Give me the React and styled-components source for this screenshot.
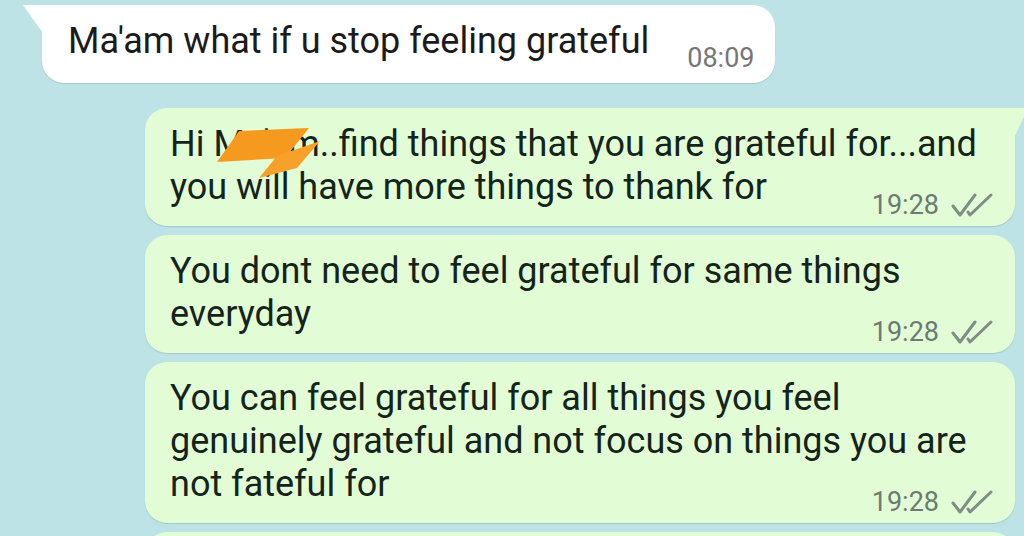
import React from "react";
import styled, { createGlobalStyle } from "styled-components";

const GlobalStyle = createGlobalStyle`
  html, body {
    margin: 0;
    padding: 0;
    background: #bde3e6;
    overflow: hidden;
  }
  body {
    font-family: Roboto, "Noto Sans", "Liberation Sans", sans-serif;
  }
`;

const Chat = styled.div`
  width: 1024px;
  height: 536px;
  overflow: hidden;
  display: flex;
  flex-direction: column;
  padding-top: 5px;
  box-sizing: border-box;
`;

const InRow = styled.div`
  display: flex;
  padding-left: 42px;
  margin-bottom: 25px;
`;

const InBubble = styled.div`
  position: relative;
  display: flex;
  align-items: flex-end;
  background: #ffffff;
  border-radius: 0 22px 22px 22px;
  padding: 15px 20px 10px 26px;
  box-shadow: 0 1px 1px rgba(40, 80, 80, 0.18);

  &::before {
    content: "";
    position: absolute;
    top: 0;
    left: -19px;
    width: 20px;
    height: 28px;
    background: #ffffff;
    clip-path: polygon(0 0, 100% 0, 100% 100%);
  }
`;

const InText = styled.div`
  font-size: 36px;
  line-height: 42px;
  color: #1b1b1b;
  margin-bottom: 11px;
  margin-right: 38px;
  white-space: nowrap;
`;

const OutList = styled.div`
  display: flex;
  flex-direction: column;
  gap: 9px;
  padding-left: 145px;
  padding-right: 9px;
`;

const OutBubble = styled.div`
  position: relative;
  background: #e2fcd6;
  border-radius: ${p => (p.$tail ? "22px 0 22px 22px" : "22px")};
  padding: 15px 22px 6px 25px;
  min-height: ${p => (p.$stub ? "60px" : "0")};
  box-shadow: 0 1px 1px rgba(40, 80, 80, 0.18);

  &::after {
    content: "";
    display: ${p => (p.$tail ? "block" : "none")};
    position: absolute;
    top: 0;
    right: -13px;
    width: 14px;
    height: 30px;
    background: #e2fcd6;
    clip-path: polygon(0 0, 100% 0, 0 100%);
  }
`;

const Line = styled.div`
  font-size: 36px;
  line-height: 43px;
  color: #15241a;
  white-space: nowrap;
`;

const Hidden = styled.span`
  position: relative;
  display: inline-block;
`;

const Scribble = styled.svg`
  position: absolute;
  left: 4px;
  top: 5px;
  width: 103px;
  height: 51px;
`;

const Meta = styled.div`
  display: flex;
  justify-content: flex-end;
  align-items: center;
  gap: 12px;
  margin-top: -19px;
`;

const Time = styled.span`
  font-size: 27px;
  line-height: 30px;
  color: ${p => p.$color || "#6d7a72"};
`;

const Ticks = () => (
  <svg width="42" height="24" viewBox="0 0 42 24" fill="none">
    <path
      d="M2 13 L9 22 L24 2"
      stroke="#7f8d85"
      strokeWidth="3"
      strokeLinecap="round"
      strokeLinejoin="round"
    />
    <path
      d="M17 19 L19 22 L40 2"
      stroke="#7f8d85"
      strokeWidth="3"
      strokeLinecap="round"
      strokeLinejoin="round"
    />
  </svg>
);

const outgoing = [
  {
    tail: true,
    lines: [
      <>
        Hi{" "}
        <Hidden>
          Ma'am
          <Scribble viewBox="0 0 103 51">
            <polygon points="0,34 22,3 92,0 68,30" fill="#f59a1e" />
            <polygon points="42,50 60,28 103,13 80,40" fill="#f7a12a" />
          </Scribble>
        </Hidden>
        ..find things that you are grateful for...and
      </>,
      "you will have more things to thank for"
    ]
  },
  {
    lines: ["You dont need to feel grateful for same things", "everyday"]
  },
  {
    lines: [
      "You can feel grateful for all things you feel",
      "genuinely grateful and not focus on things you are",
      "not fateful for"
    ]
  }
];

export default function App() {
  return (
    <Chat>
      <GlobalStyle />
      <InRow>
        <InBubble>
          <InText>Ma'am what if u stop feeling grateful</InText>
          <Time $color="#767676">08:09</Time>
        </InBubble>
      </InRow>
      <OutList>
        {outgoing.map((msg, i) => (
          <OutBubble key={i} $tail={msg.tail}>
            {msg.lines.map((l, j) => (
              <Line key={j}>{l}</Line>
            ))}
            <Meta>
              <Time>19:28</Time>
              <Ticks />
            </Meta>
          </OutBubble>
        ))}
        <OutBubble $stub />
      </OutList>
    </Chat>
  );
}
